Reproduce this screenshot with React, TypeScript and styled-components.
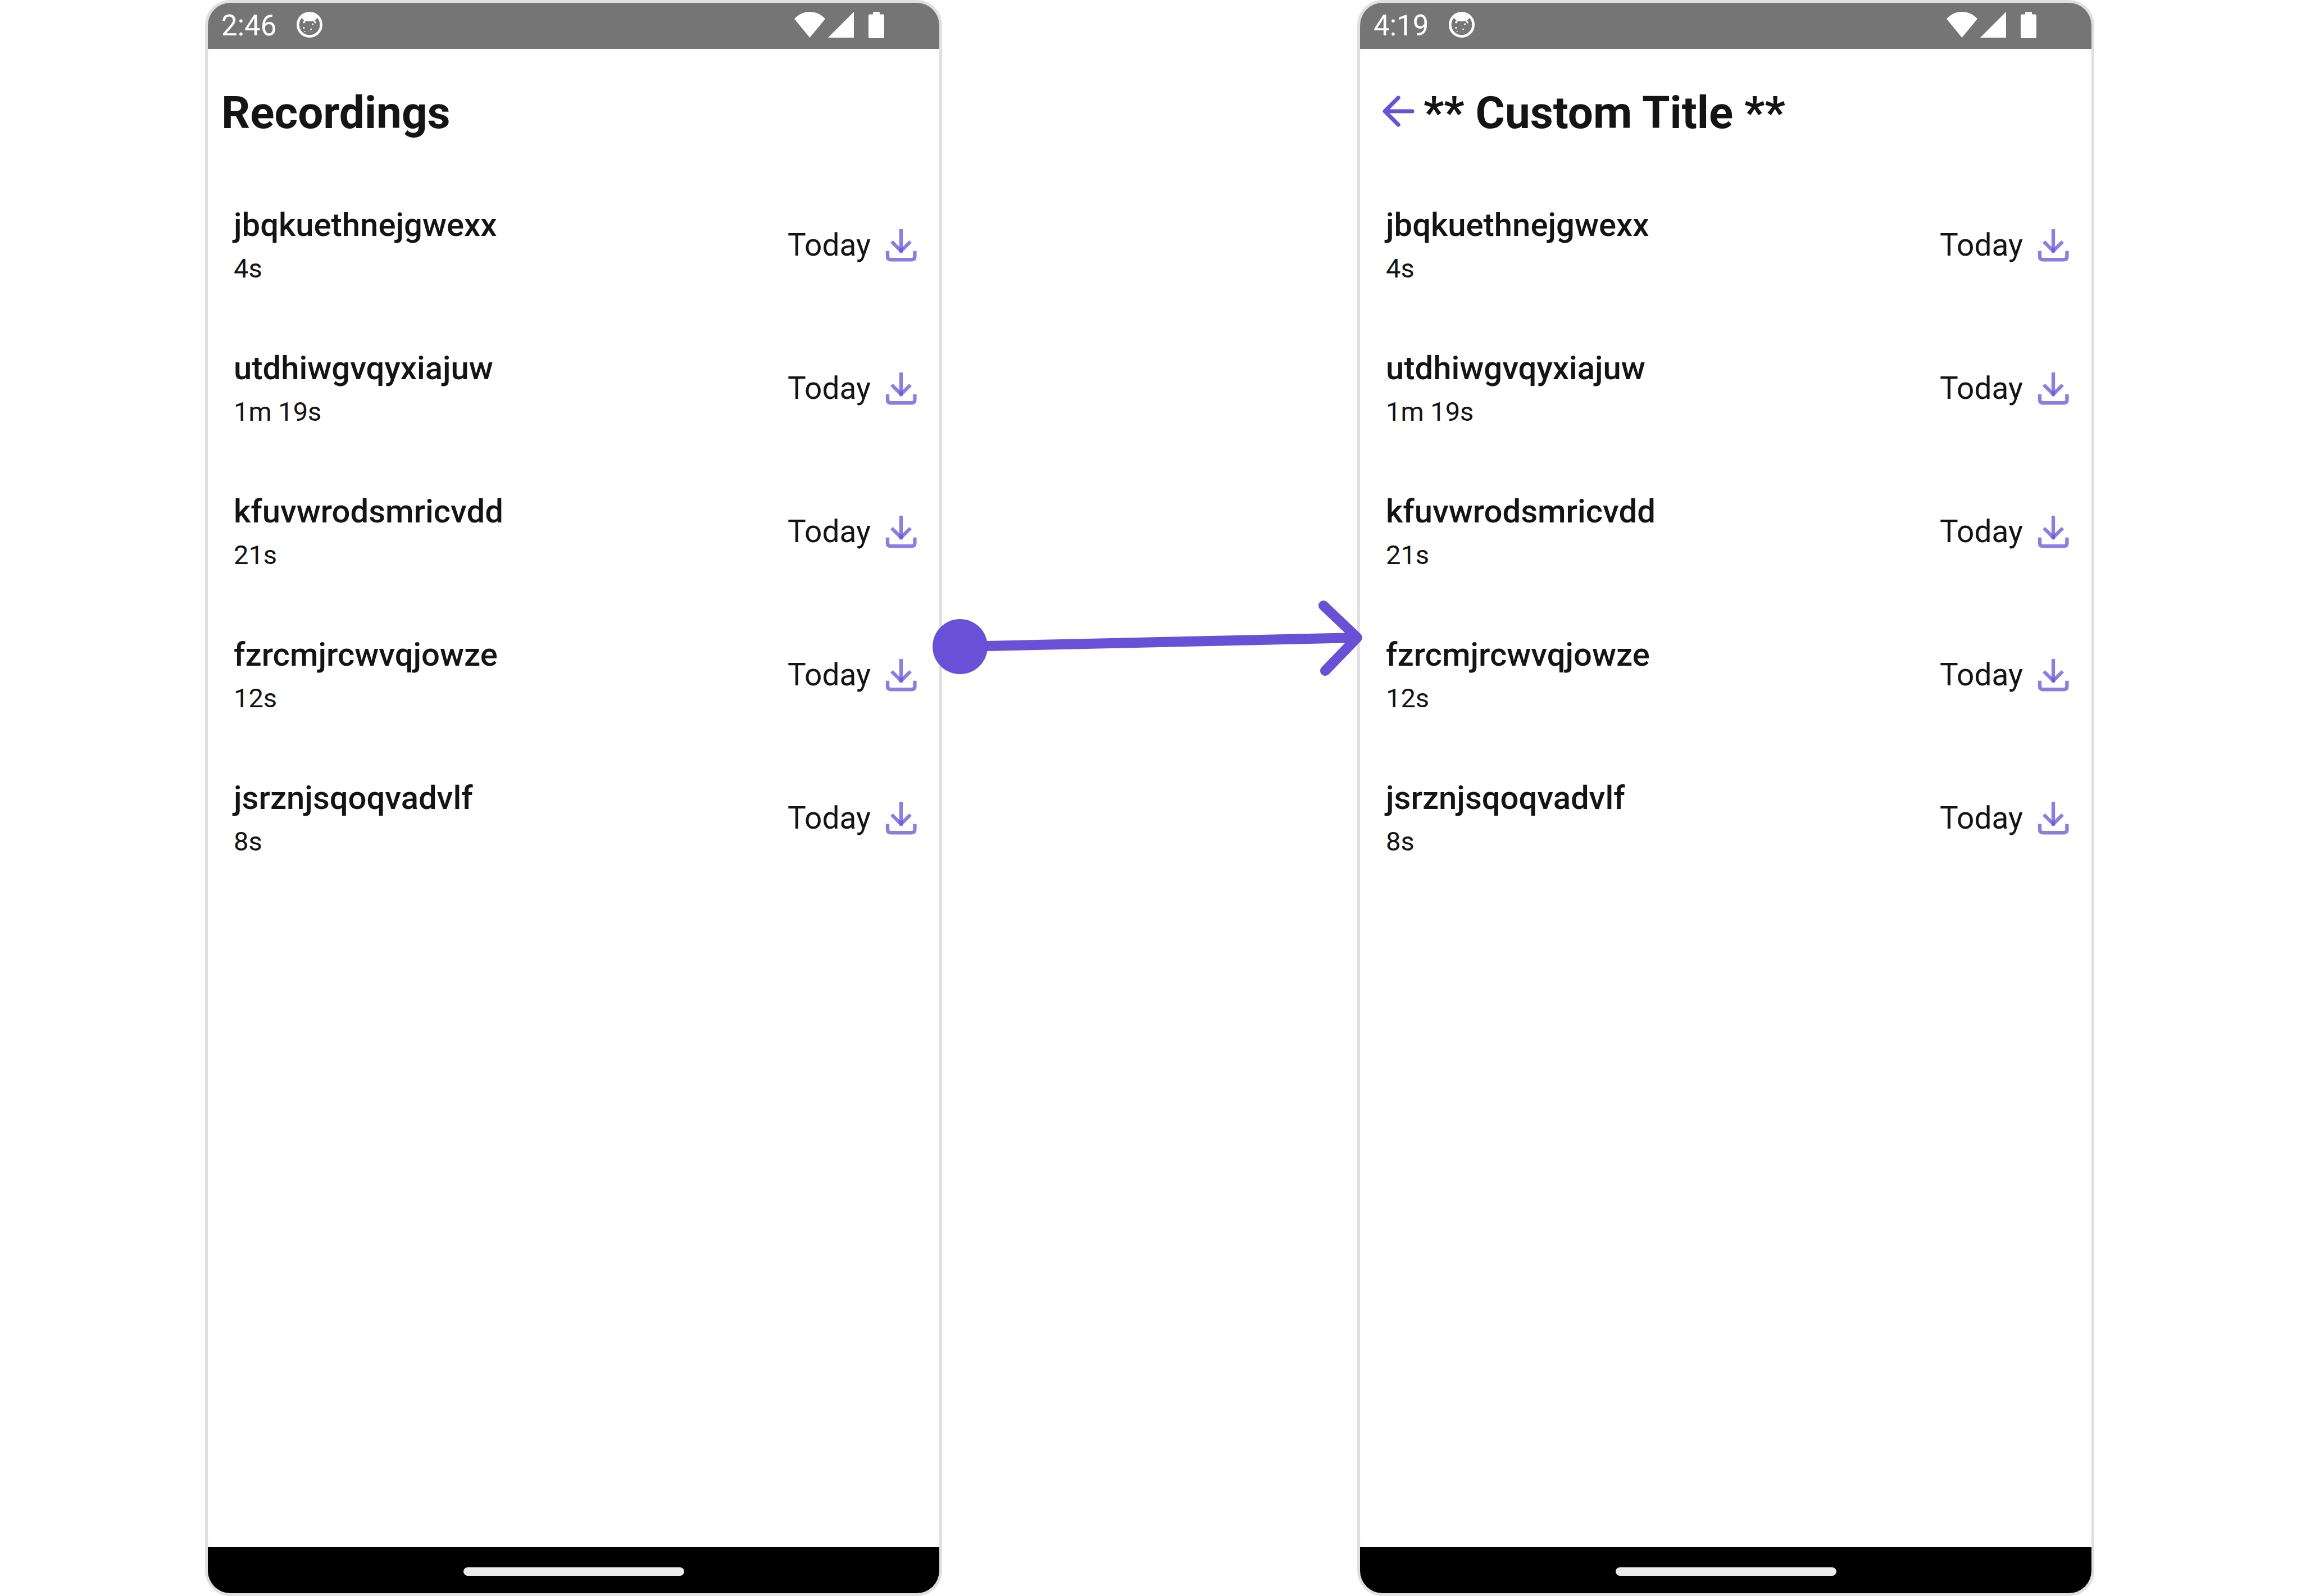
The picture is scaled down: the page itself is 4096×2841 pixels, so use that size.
import React from "react";
import styled, { createGlobalStyle } from "styled-components";

const ACCENT = "#6851d6";
const INK = "#141414";

const GlobalStyle = createGlobalStyle`
  *, *::before, *::after { box-sizing: border-box; }
  body { margin: 0; background: #ffffff; font-family: Roboto, "Noto Sans", sans-serif; color: ${INK}; }
`;

const Board = styled.main`
  position: relative;
  display: flex;
  gap: 739px;
  min-height: 100vh;
  padding: 0 368px 0 365px;
`;

const Phone = styled.section`
  flex: 1;
  min-width: 0;
  display: flex;
  flex-direction: column;
  overflow: hidden;
  border: 5px solid #e0e0e0;
  border-radius: 45px;
  background: #fafafa;
`;

const StatusBar = styled.header`
  display: flex;
  align-items: center;
  justify-content: space-between;
  height: 82px;
  padding: 0 98px 4px 24px;
  background: #757575;
  color: #ffffff;
`;

const StatusGroup = styled.div<{ $gap: number }>`
  display: flex;
  align-items: center;
  gap: ${(p) => p.$gap}px;
`;

const Clock = styled.time`
  padding-top: 4px;
  font-size: 51px;
  line-height: 60px;
`;

const Screen = styled.div`
  flex: 1;
  border-radius: 18px;
  background: #ffffff;
`;

const TitleBar = styled.div`
  display: flex;
  align-items: center;
  height: 221px;
  padding: 7px 24px 0;
`;

const BackButton = styled.button`
  display: flex;
  padding: 0 6px 6px 7px;
  border: 0;
  background: none;
  cursor: pointer;
`;

const Title = styled.h1`
  margin: 0;
  font-size: 80px;
  line-height: 96px;
  font-weight: 700;
`;

const List = styled.ul`
  margin: 0;
  padding: 0;
  list-style: none;
`;

const Row = styled.li`
  display: flex;
  align-items: center;
  justify-content: space-between;
  height: 255px;
  padding: 0 30px 0 46px;
`;

const Name = styled.h2`
  margin: 0;
  font-size: 58px;
  line-height: 84px;
  font-weight: 500;
`;

const Duration = styled.p`
  margin: 0;
  font-size: 47px;
  line-height: 72px;
`;

const RowEnd = styled.div`
  display: flex;
  align-items: center;
  gap: 16px;
`;

const Day = styled.span`
  font-size: 55px;
  line-height: 72px;
`;

const DownloadButton = styled.button`
  display: flex;
  padding: 0;
  border: 0;
  background: none;
  cursor: pointer;
`;

const NavBar = styled.footer`
  display: flex;
  align-items: center;
  justify-content: center;
  height: 82px;
  padding-top: 5px;
  background: #000000;
`;

const HomeHandle = styled.div`
  width: 393px;
  height: 15px;
  border-radius: 8px;
  background: #ebebeb;
`;

const Connector = styled.svg`
  position: absolute;
  top: 1060px;
  left: calc(50% - 390px);
  pointer-events: none;
`;

const FACE_DOTS: [number, number, number][] = [
  [8, 21, 1], [8, 28, 1], [18, 23, 1], [25, 26, 1], [31, 24, 3], [41, 26, 1],
  [14, 31, 3], [20, 33, 1], [28, 34, 3], [33, 31, 1], [38, 33, 1],
  [16, 38, 2], [23, 38, 1], [28, 41, 1],
];

const FaceIcon = () => (
  <svg width="46" height="46" viewBox="0 0 50 50" aria-hidden="true">
    <circle cx="25" cy="25" r="22.5" fill="none" stroke="#fff" strokeWidth="5" />
    <path d="M5 15A22 22 0 0 1 45 15L40 12L35 17L38 20Q38 23 35.500 22L32 17.500Q25 19.500 18 17.500L15 22Q12 23 12.500 19L15 17L10 12Z" fill="#fff" />
    {FACE_DOTS.map(([x, y, s]) => (
      <rect key={`${x}-${y}`} x={x - s / 2} y={y - s / 2} width={s} height={s} fill="#fff" />
    ))}
  </svg>
);

const WifiIcon = () => (
  <svg width="55" height="46" viewBox="0 0 60 50" aria-hidden="true">
    <path d="M0 13.500C17 -4.500 43 -4.500 60 13.500L30 50Z" fill="#fff" />
  </svg>
);

const SignalIcon = () => (
  <svg width="46" height="46" viewBox="0 0 50 50" aria-hidden="true">
    <path d="M50 0V50H0Z" fill="#fff" />
  </svg>
);

const BatteryIcon = () => (
  <svg width="28" height="47" viewBox="0 0 31 52" aria-hidden="true">
    <path d="M9 0H22V5H28Q31 5 31 8V49Q31 52 28 52H3Q0 52 0 49V8Q0 5 3 5H9Z" fill="#fff" />
  </svg>
);

const BackIcon = () => (
  <svg width="76" height="76" viewBox="0 0 84 84" aria-hidden="true">
    <path d="M68.500 42H15.500M41 15.500L14.500 42L41 68.500" fill="none" stroke={ACCENT} strokeWidth="8" strokeLinecap="round" strokeLinejoin="round" />
  </svg>
);

const DownloadIcon = () => (
  <svg width="76" height="76" viewBox="0 0 84 84" fill="none" stroke={ACCENT} strokeWidth="7" aria-hidden="true">
    <g strokeOpacity="0.75">
      <path d="M42 11V57" />
      <path d="M23.500 35.500L42 54L60.500 35.500" />
      <path d="M15.500 54V65Q15.500 71 21.500 71H63Q69 71 69 65V54" />
    </g>
  </svg>
);

const RECORDINGS = [
  { name: "jbqkuethnejgwexx", duration: "4s" },
  { name: "utdhiwgvqyxiajuw", duration: "1m 19s" },
  { name: "kfuvwrodsmricvdd", duration: "21s" },
  { name: "fzrcmjrcwvqjowze", duration: "12s" },
  { name: "jsrznjsqoqvadvlf", duration: "8s" },
];

type RecordingsPhoneProps = { time: string; title: string; withBack?: boolean };

const RecordingsPhone = ({ time, title, withBack = false }: RecordingsPhoneProps) => (
  <Phone>
    <StatusBar>
      <StatusGroup $gap={36}>
        <Clock>{time}</Clock>
        <FaceIcon />
      </StatusGroup>
      <StatusGroup $gap={5}>
        <WifiIcon />
        <StatusGroup $gap={26}>
          <SignalIcon />
          <BatteryIcon />
        </StatusGroup>
      </StatusGroup>
    </StatusBar>
    <Screen>
      <TitleBar>
        {withBack && (
          <BackButton aria-label="Back">
            <BackIcon />
          </BackButton>
        )}
        <Title>{title}</Title>
      </TitleBar>
      <List>
        {RECORDINGS.map(({ name, duration }) => (
          <Row key={name}>
            <div>
              <Name>{name}</Name>
              <Duration>{duration}</Duration>
            </div>
            <RowEnd>
              <Day>Today</Day>
              <DownloadButton aria-label={`Download ${name}`}>
                <DownloadIcon />
              </DownloadButton>
            </RowEnd>
          </Row>
        ))}
      </List>
    </Screen>
    <NavBar>
      <HomeHandle />
    </NavBar>
  </Phone>
);

export default function App() {
  return (
    <>
      <GlobalStyle />
      <Board>
        <RecordingsPhone time="2:46" title="Recordings" />
        <RecordingsPhone time="4:19" title="** Custom Title **" withBack />
        <Connector width="770" height="150" viewBox="0 0 770 150" aria-hidden="true">
          <circle cx="51" cy="91" r="49" fill={ACCENT} />
          <path d="M51 91L758 75M698 18L758 75L701 134" fill="none" stroke={ACCENT} strokeWidth="18" strokeLinecap="round" strokeLinejoin="round" />
        </Connector>
      </Board>
    </>
  );
}
